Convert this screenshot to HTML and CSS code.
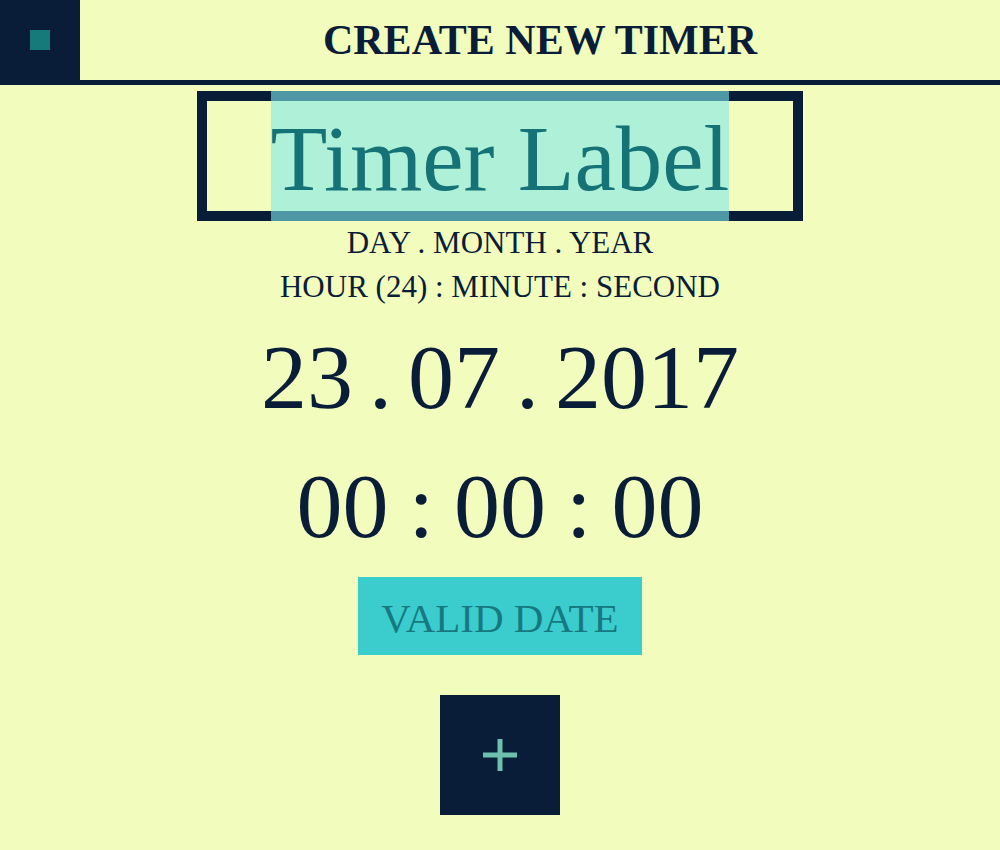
FILE: index.html
```html
<!DOCTYPE html>
<html lang="en">
<head>
<meta charset="utf-8">
<title>Create New Timer</title>
<link rel="stylesheet" href="styles.css">
</head>
<body>
<header class="topbar">
  <div class="menu-btn"><span class="menu-square"></span></div>
  <h1 class="title">CREATE NEW TIMER</h1>
</header>
<main class="form">
  <div class="label-field">
    <div class="label-edge label-edge-left"></div>
    <span class="label-text">Timer Label</span>
    <div class="label-edge label-edge-right"></div>
  </div>
  <p class="hint hint-date">DAY . MONTH . YEAR</p>
  <p class="hint hint-time">HOUR (24) : MINUTE : SECOND</p>
  <div class="big-value date-value">23 . 07 . 2017</div>
  <div class="big-value time-value">00 : 00 : 00</div>
  <button class="valid-btn" type="button">VALID DATE</button>
  <button class="add-btn" type="button" aria-label="Add">
    <svg width="34" height="34" viewBox="0 0 34 34" aria-hidden="true">
      <rect x="0" y="14.5" width="34" height="5" fill="#6cc0ae"/>
      <rect x="14.5" y="1" width="5" height="32" fill="#6cc0ae"/>
    </svg>
  </button>
</main>
</body>
</html>
```
FILE: styles.css
```css
html, body {
  margin: 0;
  padding: 0;
}
body {
  background: #f2fcbc;
  color: #0a1d38;
  font-family: "Liberation Serif", "Times New Roman", serif;
  width: 1000px;
  height: 850px;
  overflow: hidden;
}
.topbar {
  display: flex;
  height: 80px;
  border-bottom: 5px solid #0a1d38;
}
.menu-btn {
  width: 80px;
  height: 80px;
  background: #0a1d38;
  display: flex;
  align-items: center;
  justify-content: center;
}
.menu-square {
  width: 20px;
  height: 20px;
  background: #167a7b;
}
.title {
  flex: 1;
  margin: 0;
  text-align: center;
  font-size: 42px;
  line-height: 80px;
  font-weight: bold;
  color: #0a1d38;
}
.form {
  display: flex;
  flex-direction: column;
  align-items: center;
}
.label-field {
  display: flex;
  width: 606px;
  height: 130px;
  margin-top: 6px;
}
.label-edge {
  flex: 1;
  border-top: 10px solid #0a1d38;
  border-bottom: 10px solid #0a1d38;
}
.label-edge-left {
  border-left: 10px solid #0a1d38;
}
.label-edge-right {
  border-right: 10px solid #0a1d38;
}
.label-text {
  display: block;
  background: #aef0d8;
  border-top: 10px solid #4e97a5;
  border-bottom: 10px solid #4e97a5;
  color: #157377;
  font-size: 93px;
  line-height: 104px;
  padding-top: 6px;
  white-space: nowrap;
}
.hint {
  margin: 0;
  font-size: 31px;
  line-height: 44px;
  color: #0a1d38;
}
.big-value {
  font-size: 92px;
  line-height: 100px;
  color: #0a1d38;
  white-space: nowrap;
}
.date-value {
  margin-top: 18px;
  word-spacing: -7px;
}
.time-value {
  margin-top: 29px;
  word-spacing: -3px;
}
.valid-btn {
  margin-top: 21px;
  height: 78px;
  box-sizing: border-box;
  padding: 5px 23px 0;
  border: none;
  background: #3bcdcd;
  color: #17787f;
  font-family: "Liberation Serif", "Times New Roman", serif;
  font-size: 41px;
  line-height: 73px;
}
.add-btn {
  margin-top: 40px;
  width: 120px;
  height: 120px;
  border: none;
  padding: 0;
  background: #0a1d38;
  display: flex;
  align-items: center;
  justify-content: center;
}
```
